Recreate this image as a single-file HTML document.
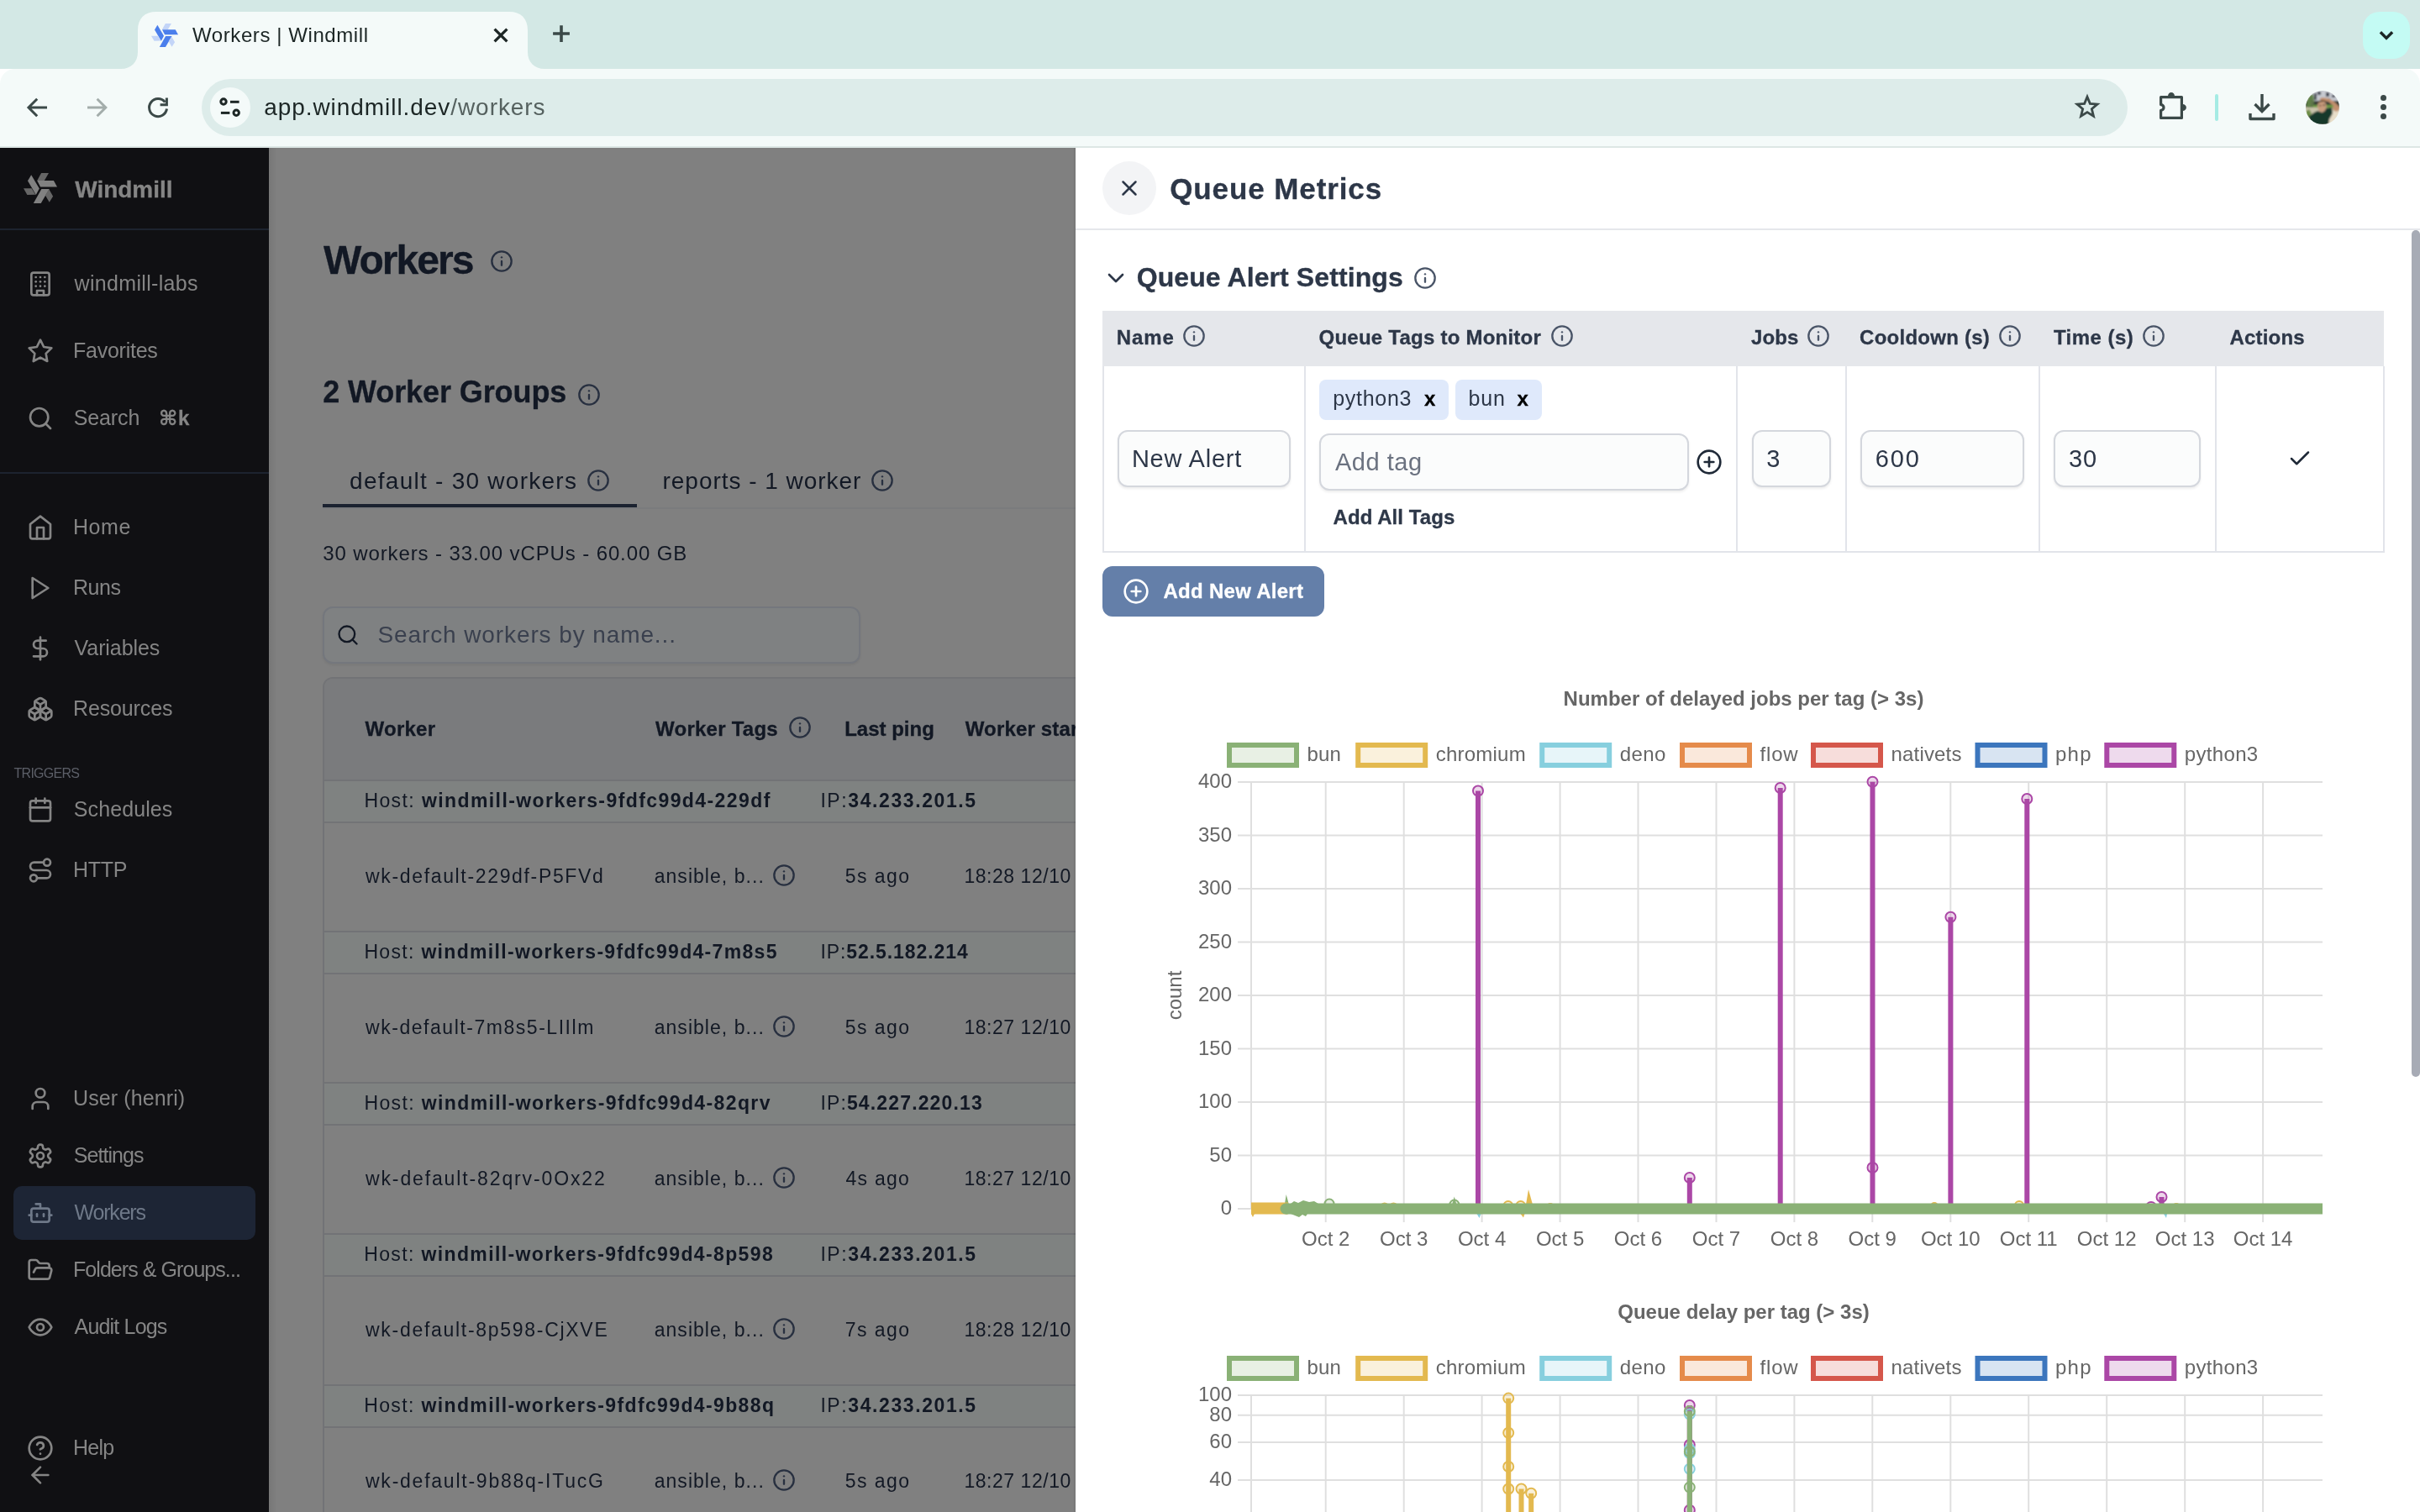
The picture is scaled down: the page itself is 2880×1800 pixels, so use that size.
<!DOCTYPE html>
<html lang="en"><head><meta charset="utf-8"><title>Workers | Windmill</title><style>html,body{margin:0;padding:0}body{width:2880px;height:1800px;overflow:hidden;background:#fff;font-family:"Liberation Sans", "DejaVu Sans", sans-serif}#r{position:relative;width:2880px;height:1800px;overflow:hidden}#r>div,#r>svg,#r>span{position:absolute;display:block}.t{white-space:nowrap;line-height:1}#r{-webkit-font-smoothing:antialiased;will-change:transform}</style></head><body><div id="r">
<div style="left:0px;top:0px;width:2880px;height:82px;background:#d3e8e5;"></div>
<svg style="left:144px;top:14px" width="504" height="68" viewBox="0 0 504 68"><path d="M0 68 C12 68 20 60 20 48 L20 22 C20 8 28 0 42 0 L462 0 C476 0 484 8 484 22 L484 48 C484 60 492 68 504 68 Z" fill="#f4faf9"/></svg>
<div style="left:0px;top:82px;width:2880px;height:92px;background:#f4faf9;border-radius:18px 18px 0 0;"></div>
<div style="left:0px;top:174px;width:2880px;height:2px;background:#dde7e5;"></div>
<svg style="left:180px;top:27.7px" width="32" height="28.8" viewBox="0 0 40 36"><g fill="#4b7fec"><polygon points="9.2,2.2 18.8,18.5 14.8,25.9 5,9.3"/><polygon points="16.2,9.1 35.9,9.1 40,16.5 20.1,16.5"/><polygon points="21.4,18.9 30.7,18.9 20.7,35.9 11.8,35.9"/></g><g fill="#c3d5f8"><polygon points="21.1,0 30,0 24.8,8.9 16.2,8.9"/><polygon points="0,18.3 9.6,18.3 14.2,25.7 4.4,25.9"/><polygon points="30.3,19.3 35.1,27.8 30.7,34.8 25.9,26.5"/></g></svg>
<span class="t" style="left:229.0px;top:29.7px;font-size:24px;color:#1c2625;letter-spacing:0.58px;">Workers | Windmill</span>
<svg style="left:583px;top:29px" width="26" height="26" viewBox="0 0 26 26" fill="none" stroke="#1c2625" stroke-width="3.3"><path d="M5.6 5.6l14.8 14.8M20.4 5.6L5.6 20.4"/></svg>
<svg style="left:654px;top:26px" width="28" height="28" viewBox="0 0 28 28" fill="none" stroke="#3b4948" stroke-width="3.6" stroke-linecap="butt"><path d="M14 4.2v19.8M4.1 14h19.8"/></svg>
<div style="left:2812px;top:14px;width:56px;height:56px;background:#c4fbf4;border-radius:20px;"></div>
<svg style="left:2826px;top:30px" width="28" height="24" viewBox="0 0 28 24" fill="none" stroke="#1c2625" stroke-width="3.4" stroke-linejoin="miter"><path d="M6.9 8.3l7.1 7.1 7.1-7.1"/></svg>
<svg style="left:28px;top:112px" width="32" height="32" viewBox="0 0 32 32" fill="none" stroke="#3b4948" stroke-width="3" stroke-linejoin="miter"><path d="M16.2 5.8L6 16l10.2 10.2M6.5 16H28"/></svg>
<svg style="left:100px;top:112px" width="32" height="32" viewBox="0 0 32 32" fill="none" stroke="#a3adab" stroke-width="3" stroke-linejoin="miter"><path d="M15.6 5.8l10.2 10.2-10.2 10.2M25.3 16H4"/></svg>
<svg style="left:172px;top:112px" width="32" height="32" viewBox="0 0 32 32" fill="none" stroke="#3b4948" stroke-width="3"><path d="M26.5 17.5A10.5 10.5 0 1 1 24.4 9.7"/><path d="M26.4 4.4V12.7H18.6" stroke-linejoin="miter"/></svg>
<div style="left:240px;top:94px;width:2292px;height:68px;background:#ddecea;border-radius:34px;"></div>
<div style="left:250px;top:104px;width:48px;height:48px;background:#f4faf9;border-radius:24px;"></div>
<svg style="left:258px;top:112px" width="32" height="32" viewBox="0 0 32 32" fill="none" stroke="#1c2625" stroke-width="3"><circle cx="8" cy="9" r="3.2"/><path d="M16 9.3h10.6"/><circle cx="23.2" cy="22.3" r="3.2"/><path d="M4.9 22.4h10.5"/></svg>
<span class="t" style="left:314.2px;top:113.8px;font-size:28px;color:#1c2625;letter-spacing:0.94px;">app.windmill.dev<span style="color:#55615f">/workers</span></span>
<svg style="left:2467.7px;top:111px" width="32" height="32" viewBox="0 0 24 24" fill="none" stroke="#3b4948" stroke-width="2.1" stroke-linejoin="miter"><polygon points="12 3.2 14.5 9.3 21 9.8 16 14 17.6 20.4 12 17 6.4 20.4 8 14 3 9.8 9.5 9.3"/></svg>
<svg style="left:2566px;top:108px" width="40" height="40" viewBox="0 0 40 40" fill="none" stroke="#3b4948" stroke-width="3.2" stroke-linejoin="round"><path d="M5.6 7.6H30.4V32.4H5.6V23.4A3.4 3.4 0 0 0 5.6 16.6Z"/><path d="M14 6.4a4 4.3 0 0 1 8 0zM31.6 16a4.3 4 0 0 1 0 8z" fill="#3b4948" stroke="none"/></svg>
<div style="left:2636px;top:112px;width:4px;height:32px;background:#a5ebe4;border-radius:2px;"></div>
<svg style="left:2674px;top:110px" width="36" height="36" viewBox="0 0 36 36" fill="none" stroke="#3b4948" stroke-width="3.4" stroke-linejoin="miter"><path d="M18 2v20M9.5 14l8.5 8.5 8.5-8.5"/><path d="M4 25v6.5h28V25" stroke-linejoin="round"/></svg>
<svg style="left:2744px;top:108px" width="40" height="40" viewBox="0 0 40 40"><defs><clipPath id="av"><circle cx="20" cy="20" r="20"/></clipPath><filter id="avb" x="-10%" y="-10%" width="120%" height="120%"><feGaussianBlur stdDeviation="0.9"/></filter></defs><g clip-path="url(#av)"><g filter="url(#avb)"><rect x="-2" y="-2" width="44" height="44" fill="#c8c4b0"/><rect x="6" y="-2" width="36" height="14" fill="#c6c9d0"/><path d="M10 3h3v8h-3zM14 1h4v4h-4zM24 2h4v5h-4zM23 9h2v4h-2zM27 9h2v4h-2zM31 5h4v3h-4z" fill="#3b404c"/><rect x="-2" y="12" width="44" height="7" fill="#343d38"/><rect x="6" y="17" width="30" height="3.4" fill="#6f9a42"/><path d="M1 14c1-6 4-10 8-10l1 9-2 7h-7z" fill="#5f8246"/><rect x="6.6" y="11" width="1" height="13" fill="#5d5a50"/><path d="M-2 20h16v9l-10 4h-6z" fill="#c9c3aa"/><path d="M0 25l4-3 3 5-3 4h-4z" fill="#6d8f47"/><path d="M26 24h16v18h-16z" fill="#e8dec9"/><path d="M3 31l7-5 4-2 6 2 3-5 8-1 1 7-4 7-1 7H7z" fill="#15382c"/><path d="M16 10.5l3-2.5 8 1 7 4 6 6v4l-4 2-4-3 1-4-6-5-7-1z" fill="#c3906e"/><ellipse cx="19.3" cy="18.6" rx="5.3" ry="6.8" fill="#c99c7e"/><path d="M13.8 15.5c0-5 10-6 11-1.5-3-1.6-7-1.3-11 1.5z" fill="#5c3f2b"/><path d="M16 17h2.4v1.3H16zM20.6 16.6H23v1.3h-2.4z" fill="#4a3226"/></g></g></svg>
<div style="left:2832.5px;top:113.3px;width:7px;height:7px;background:#3b4948;border-radius:50%;"></div>
<div style="left:2832.5px;top:124.3px;width:7px;height:7px;background:#3b4948;border-radius:50%;"></div>
<div style="left:2832.5px;top:135.3px;width:7px;height:7px;background:#3b4948;border-radius:50%;"></div>
<div style="left:320px;top:176px;width:960px;height:1624px;background:#808080;"></div>
<div style="left:320px;top:176px;width:10px;height:1624px;background:linear-gradient(90deg,rgba(0,0,0,.07),rgba(0,0,0,0));"></div>
<span class="t" style="left:385.0px;top:286.2px;font-size:48px;font-weight:700;-webkit-text-stroke:.3px;color:#121824;letter-spacing:-1.95px;">Workers</span>
<svg style="left:582.7px;top:297.0px;" width="28" height="28" viewBox="0 0 24 24" fill="none" stroke="#283040" stroke-width="2" stroke-linecap="round" stroke-linejoin="round"><circle cx="12" cy="12" r="10"/><path d="M12 16v-4"/><path d="M12 8h.01"/></svg>
<span class="t" style="left:384.2px;top:449.2px;font-size:36px;font-weight:700;-webkit-text-stroke:.3px;color:#121824;letter-spacing:-0.09px;">2 Worker Groups</span>
<svg style="left:687.0px;top:455.7px;" width="28" height="28" viewBox="0 0 24 24" fill="none" stroke="#283040" stroke-width="2" stroke-linecap="round" stroke-linejoin="round"><circle cx="12" cy="12" r="10"/><path d="M12 16v-4"/><path d="M12 8h.01"/></svg>
<div style="left:384px;top:604px;width:896px;height:2px;background:#7a7b7d;"></div>
<div style="left:384px;top:600px;width:374px;height:4px;background:#1b2230;"></div>
<span class="t" style="left:416.1px;top:558.5px;font-size:28px;color:#121824;letter-spacing:1.26px;">default - 30 workers</span>
<svg style="left:698.0px;top:558.0px;" width="28" height="28" viewBox="0 0 24 24" fill="none" stroke="#283040" stroke-width="2" stroke-linecap="round" stroke-linejoin="round"><circle cx="12" cy="12" r="10"/><path d="M12 16v-4"/><path d="M12 8h.01"/></svg>
<span class="t" style="left:788.5px;top:558.5px;font-size:28px;color:#121824;letter-spacing:0.97px;">reports - 1 worker</span>
<svg style="left:1035.7px;top:558.0px;" width="28" height="28" viewBox="0 0 24 24" fill="none" stroke="#283040" stroke-width="2" stroke-linecap="round" stroke-linejoin="round"><circle cx="12" cy="12" r="10"/><path d="M12 16v-4"/><path d="M12 8h.01"/></svg>
<span class="t" style="left:384.2px;top:647.3px;font-size:24px;color:#121824;letter-spacing:0.89px;">30 workers - 33.00 vCPUs - 60.00 GB</span>
<div style="left:384px;top:722px;width:640px;height:68px;background:#7f8182;border:2px solid #74777d;border-radius:12px;box-sizing:border-box;box-shadow:0 2px 3px rgba(0,0,0,.06);"></div>
<svg style="left:400.0px;top:742.0px;" width="28" height="28" viewBox="0 0 24 24" fill="none" stroke="#121824" stroke-width="2" stroke-linecap="round" stroke-linejoin="round"><circle cx="11" cy="11" r="8"/><path d="m21 21-4.3-4.3"/></svg>
<span class="t" style="left:449.4px;top:742.3px;font-size:28px;color:#3a404e;letter-spacing:0.90px;">Search workers by name...</span>
<div style="left:384px;top:806px;width:1000px;height:1100px;background:#808080;border:2px solid #727376;border-radius:12px;box-sizing:border-box;"></div>
<div style="left:386px;top:808px;width:998px;height:121px;background:#7a7b7d;border-radius:10px 0 0 0;"></div>
<span class="t" style="left:434.5px;top:855.5px;font-size:24px;font-weight:700;-webkit-text-stroke:.3px;color:#121824;letter-spacing:0.25px;">Worker</span>
<span class="t" style="left:780.0px;top:855.5px;font-size:24px;font-weight:700;-webkit-text-stroke:.3px;color:#121824;letter-spacing:0.25px;">Worker Tags</span>
<svg style="left:938.0px;top:852.0px;" width="28" height="28" viewBox="0 0 24 24" fill="none" stroke="#283040" stroke-width="2" stroke-linecap="round" stroke-linejoin="round"><circle cx="12" cy="12" r="10"/><path d="M12 16v-4"/><path d="M12 8h.01"/></svg>
<span class="t" style="left:1005.2px;top:855.5px;font-size:24px;font-weight:700;-webkit-text-stroke:.3px;color:#121824;">Last ping</span>
<span class="t" style="left:1148.7px;top:855.5px;font-size:24px;font-weight:700;-webkit-text-stroke:.3px;color:#121824;letter-spacing:0.17px;">Worker start</span>
<div style="left:386px;top:928px;width:998px;height:2px;background:#727376;"></div>
<div style="left:386px;top:930px;width:998px;height:48px;background:#7f8281;"></div>
<div style="left:386px;top:978px;width:998px;height:2px;background:#727376;"></div>
<span class="t" style="left:433.4px;top:941.9px;font-size:23px;color:#121824;letter-spacing:1.41px;">Host: <b>windmill-workers-9fdfc99d4-229df</b></span>
<span class="t" style="left:976.4px;top:941.9px;font-size:23px;color:#121824;letter-spacing:1.59px;">IP:<b>34.233.201.5</b></span>
<span class="t" style="left:435.0px;top:1031.8px;font-size:23px;color:#121824;letter-spacing:1.66px;">wk-default-229df-P5FVd</span>
<span class="t" style="left:778.7px;top:1031.8px;font-size:23px;color:#121824;letter-spacing:1.04px;">ansible, b...</span>
<svg style="left:919.0px;top:1028.3px;" width="28" height="28" viewBox="0 0 24 24" fill="none" stroke="#283040" stroke-width="2" stroke-linecap="round" stroke-linejoin="round"><circle cx="12" cy="12" r="10"/><path d="M12 16v-4"/><path d="M12 8h.01"/></svg>
<span class="t" style="left:1005.7px;top:1031.8px;font-size:23px;color:#121824;letter-spacing:1.44px;">5s ago</span>
<span class="t" style="left:1147.4px;top:1031.8px;font-size:23px;color:#121824;letter-spacing:0.54px;">18:28 12/10</span>
<div style="left:386px;top:1108px;width:998px;height:2px;background:#727376;"></div>
<div style="left:386px;top:1110px;width:998px;height:48px;background:#7f8281;"></div>
<div style="left:386px;top:1158px;width:998px;height:2px;background:#727376;"></div>
<span class="t" style="left:433.4px;top:1121.9px;font-size:23px;color:#121824;letter-spacing:1.32px;">Host: <b>windmill-workers-9fdfc99d4-7m8s5</b></span>
<span class="t" style="left:976.4px;top:1121.9px;font-size:23px;color:#121824;letter-spacing:0.93px;">IP:<b>52.5.182.214</b></span>
<span class="t" style="left:435.0px;top:1211.8px;font-size:23px;color:#121824;letter-spacing:1.54px;">wk-default-7m8s5-LIIlm</span>
<span class="t" style="left:778.7px;top:1211.8px;font-size:23px;color:#121824;letter-spacing:1.04px;">ansible, b...</span>
<svg style="left:919.0px;top:1208.3px;" width="28" height="28" viewBox="0 0 24 24" fill="none" stroke="#283040" stroke-width="2" stroke-linecap="round" stroke-linejoin="round"><circle cx="12" cy="12" r="10"/><path d="M12 16v-4"/><path d="M12 8h.01"/></svg>
<span class="t" style="left:1005.7px;top:1211.8px;font-size:23px;color:#121824;letter-spacing:1.44px;">5s ago</span>
<span class="t" style="left:1147.4px;top:1211.8px;font-size:23px;color:#121824;letter-spacing:0.54px;">18:27 12/10</span>
<div style="left:386px;top:1288px;width:998px;height:2px;background:#727376;"></div>
<div style="left:386px;top:1290px;width:998px;height:48px;background:#7f8281;"></div>
<div style="left:386px;top:1338px;width:998px;height:2px;background:#727376;"></div>
<span class="t" style="left:433.4px;top:1301.9px;font-size:23px;color:#121824;letter-spacing:1.38px;">Host: <b>windmill-workers-9fdfc99d4-82qrv</b></span>
<span class="t" style="left:976.4px;top:1301.9px;font-size:23px;color:#121824;letter-spacing:1.14px;">IP:<b>54.227.220.13</b></span>
<span class="t" style="left:435.0px;top:1391.8px;font-size:23px;color:#121824;letter-spacing:1.87px;">wk-default-82qrv-0Ox22</span>
<span class="t" style="left:778.7px;top:1391.8px;font-size:23px;color:#121824;letter-spacing:1.04px;">ansible, b...</span>
<svg style="left:919.0px;top:1388.3px;" width="28" height="28" viewBox="0 0 24 24" fill="none" stroke="#283040" stroke-width="2" stroke-linecap="round" stroke-linejoin="round"><circle cx="12" cy="12" r="10"/><path d="M12 16v-4"/><path d="M12 8h.01"/></svg>
<span class="t" style="left:1006.5px;top:1391.8px;font-size:23px;color:#121824;letter-spacing:1.26px;">4s ago</span>
<span class="t" style="left:1147.4px;top:1391.8px;font-size:23px;color:#121824;letter-spacing:0.54px;">18:27 12/10</span>
<div style="left:386px;top:1468px;width:998px;height:2px;background:#727376;"></div>
<div style="left:386px;top:1470px;width:998px;height:48px;background:#7f8281;"></div>
<div style="left:386px;top:1518px;width:998px;height:2px;background:#727376;"></div>
<span class="t" style="left:433.2px;top:1481.9px;font-size:23px;color:#121824;letter-spacing:1.37px;">Host: <b>windmill-workers-9fdfc99d4-8p598</b></span>
<span class="t" style="left:976.4px;top:1481.9px;font-size:23px;color:#121824;letter-spacing:1.59px;">IP:<b>34.233.201.5</b></span>
<span class="t" style="left:435.0px;top:1571.8px;font-size:23px;color:#121824;letter-spacing:1.71px;">wk-default-8p598-CjXVE</span>
<span class="t" style="left:778.7px;top:1571.8px;font-size:23px;color:#121824;letter-spacing:1.04px;">ansible, b...</span>
<svg style="left:919.0px;top:1568.3px;" width="28" height="28" viewBox="0 0 24 24" fill="none" stroke="#283040" stroke-width="2" stroke-linecap="round" stroke-linejoin="round"><circle cx="12" cy="12" r="10"/><path d="M12 16v-4"/><path d="M12 8h.01"/></svg>
<span class="t" style="left:1005.7px;top:1571.8px;font-size:23px;color:#121824;letter-spacing:1.44px;">7s ago</span>
<span class="t" style="left:1147.4px;top:1571.8px;font-size:23px;color:#121824;letter-spacing:0.54px;">18:28 12/10</span>
<div style="left:386px;top:1648px;width:998px;height:2px;background:#727376;"></div>
<div style="left:386px;top:1650px;width:998px;height:48px;background:#7f8281;"></div>
<div style="left:386px;top:1698px;width:998px;height:2px;background:#727376;"></div>
<span class="t" style="left:433.2px;top:1661.9px;font-size:23px;color:#121824;letter-spacing:1.37px;">Host: <b>windmill-workers-9fdfc99d4-9b88q</b></span>
<span class="t" style="left:976.4px;top:1661.9px;font-size:23px;color:#121824;letter-spacing:1.59px;">IP:<b>34.233.201.5</b></span>
<span class="t" style="left:435.0px;top:1751.8px;font-size:23px;color:#121824;letter-spacing:1.76px;">wk-default-9b88q-ITucG</span>
<span class="t" style="left:778.7px;top:1751.8px;font-size:23px;color:#121824;letter-spacing:1.04px;">ansible, b...</span>
<svg style="left:919.0px;top:1748.3px;" width="28" height="28" viewBox="0 0 24 24" fill="none" stroke="#283040" stroke-width="2" stroke-linecap="round" stroke-linejoin="round"><circle cx="12" cy="12" r="10"/><path d="M12 16v-4"/><path d="M12 8h.01"/></svg>
<span class="t" style="left:1005.7px;top:1751.8px;font-size:23px;color:#121824;letter-spacing:1.44px;">5s ago</span>
<span class="t" style="left:1147.4px;top:1751.8px;font-size:23px;color:#121824;letter-spacing:0.54px;">18:27 12/10</span>
<div style="left:0px;top:176px;width:320px;height:1624px;background:#101013;"></div>
<svg style="left:27.9px;top:206px" width="40" height="36" viewBox="0 0 40 36"><g fill="#818181"><polygon points="9.2,2.2 18.8,18.5 14.8,25.9 5,9.3"/><polygon points="16.2,9.1 35.9,9.1 40,16.5 20.1,16.5"/><polygon points="21.4,18.9 30.7,18.9 20.7,35.9 11.8,35.9"/></g><g fill="#666666"><polygon points="21.1,0 30,0 24.8,8.9 16.2,8.9"/><polygon points="0,18.3 9.6,18.3 14.2,25.7 4.4,25.9"/><polygon points="30.3,19.3 35.1,27.8 30.7,34.8 25.9,26.5"/></g></svg>
<span class="t" style="left:89.3px;top:212.3px;font-size:28px;font-weight:700;-webkit-text-stroke:.3px;color:#858585;letter-spacing:-0.03px;">Windmill</span>
<div style="left:0px;top:272px;width:320px;height:2px;background:#1d232f;"></div>
<div style="left:0px;top:562px;width:320px;height:2px;background:#1d232f;"></div>
<div style="left:16px;top:1412px;width:288px;height:64px;background:#1d2535;border-radius:10px;"></div>
<svg style="left:32.0px;top:322.0px;" width="32" height="32" viewBox="0 0 24 24" fill="none" stroke="#858585" stroke-width="2" stroke-linecap="round" stroke-linejoin="round"><rect width="16" height="20" x="4" y="2" rx="2" ry="2"/><path d="M9 22v-4h6v4"/><path d="M8 6h.01"/><path d="M16 6h.01"/><path d="M12 6h.01"/><path d="M12 10h.01"/><path d="M12 14h.01"/><path d="M16 10h.01"/><path d="M16 14h.01"/><path d="M8 10h.01"/><path d="M8 14h.01"/></svg>
<span class="t" style="left:88.6px;top:324.8px;font-size:25px;color:#858585;letter-spacing:0.32px;">windmill-labs</span>
<svg style="left:32.0px;top:402.0px;" width="32" height="32" viewBox="0 0 24 24" fill="none" stroke="#858585" stroke-width="2" stroke-linecap="round" stroke-linejoin="round"><polygon points="12 2 15.09 8.26 22 9.27 17 14.14 18.18 21.02 12 17.77 5.82 21.02 7 14.14 2 9.27 8.91 8.26 12 2"/></svg>
<span class="t" style="left:87.0px;top:404.8px;font-size:25px;color:#858585;letter-spacing:-0.25px;">Favorites</span>
<svg style="left:32.0px;top:482.0px;" width="32" height="32" viewBox="0 0 24 24" fill="none" stroke="#858585" stroke-width="2" stroke-linecap="round" stroke-linejoin="round"><circle cx="11" cy="11" r="8"/><path d="m21 21-4.3-4.3"/></svg>
<span class="t" style="left:87.8px;top:484.8px;font-size:25px;color:#858585;letter-spacing:-0.14px;">Search</span>
<svg style="left:32.0px;top:612.0px;" width="32" height="32" viewBox="0 0 24 24" fill="none" stroke="#858585" stroke-width="2" stroke-linecap="round" stroke-linejoin="round"><path d="m3 9 9-7 9 7v11a2 2 0 0 1-2 2H5a2 2 0 0 1-2-2z"/><polyline points="9 22 9 12 15 12 15 22"/></svg>
<span class="t" style="left:87.0px;top:614.8px;font-size:25px;color:#858585;letter-spacing:0.54px;">Home</span>
<svg style="left:32.0px;top:684.0px;" width="32" height="32" viewBox="0 0 24 24" fill="none" stroke="#858585" stroke-width="2" stroke-linecap="round" stroke-linejoin="round"><polygon points="5 3 19 12 5 21 5 3"/></svg>
<span class="t" style="left:87.0px;top:686.8px;font-size:25px;color:#858585;letter-spacing:-0.48px;">Runs</span>
<svg style="left:32.0px;top:756.0px;" width="32" height="32" viewBox="0 0 24 24" fill="none" stroke="#858585" stroke-width="2" stroke-linecap="round" stroke-linejoin="round"><line x1="12" x2="12" y1="2" y2="22"/><path d="M17 5H9.5a3.5 3.5 0 0 0 0 7h5a3.5 3.5 0 0 1 0 7H6"/></svg>
<span class="t" style="left:88.6px;top:758.8px;font-size:25px;color:#858585;letter-spacing:-0.09px;">Variables</span>
<svg style="left:32.0px;top:828.0px;" width="32" height="32" viewBox="0 0 24 24" fill="none" stroke="#858585" stroke-width="2" stroke-linecap="round" stroke-linejoin="round"><path d="M2.97 12.92A2 2 0 0 0 2 14.63v3.24a2 2 0 0 0 .97 1.71l3 1.8a2 2 0 0 0 2.06 0L12 19v-5.5l-5-3-4.03 2.42Z"/><path d="m7 16.5-4.74-2.85"/><path d="m7 16.5 5-3"/><path d="M7 16.5v5.17"/><path d="M12 13.5V19l3.97 2.38a2 2 0 0 0 2.06 0l3-1.8a2 2 0 0 0 .97-1.71v-3.24a2 2 0 0 0-.97-1.71L17 10.5l-5 3Z"/><path d="m17 16.5-5-3"/><path d="m17 16.5 4.74-2.85"/><path d="M17 16.5v5.17"/><path d="M7.97 4.42A2 2 0 0 0 7 6.13v4.37l5 3 5-3V6.13a2 2 0 0 0-.97-1.71l-3-1.8a2 2 0 0 0-2.06 0l-3 1.8Z"/><path d="M12 8 7.26 5.15"/><path d="m12 8 4.74-2.85"/><path d="M12 13.5V8"/></svg>
<span class="t" style="left:87.0px;top:830.8px;font-size:25px;color:#858585;letter-spacing:-0.13px;">Resources</span>
<svg style="left:32.0px;top:948.0px;" width="32" height="32" viewBox="0 0 24 24" fill="none" stroke="#858585" stroke-width="2" stroke-linecap="round" stroke-linejoin="round"><rect width="18" height="18" x="3" y="4" rx="2" ry="2"/><line x1="16" x2="16" y1="2" y2="6"/><line x1="8" x2="8" y1="2" y2="6"/><line x1="3" x2="21" y1="10" y2="10"/></svg>
<span class="t" style="left:87.8px;top:950.8px;font-size:25px;color:#858585;letter-spacing:0.09px;">Schedules</span>
<svg style="left:32.0px;top:1020.0px;" width="32" height="32" viewBox="0 0 24 24" fill="none" stroke="#858585" stroke-width="2" stroke-linecap="round" stroke-linejoin="round"><circle cx="6" cy="19" r="3"/><path d="M9 19h8.5a3.5 3.5 0 0 0 0-7h-11a3.5 3.5 0 0 1 0-7H15"/><circle cx="18" cy="5" r="3"/></svg>
<span class="t" style="left:87.0px;top:1022.8px;font-size:25px;color:#858585;letter-spacing:-0.30px;">HTTP</span>
<svg style="left:32.0px;top:1292.0px;" width="32" height="32" viewBox="0 0 24 24" fill="none" stroke="#858585" stroke-width="2" stroke-linecap="round" stroke-linejoin="round"><path d="M19 21v-2a4 4 0 0 0-4-4H9a4 4 0 0 0-4 4v2"/><circle cx="12" cy="7" r="4"/></svg>
<span class="t" style="left:87.0px;top:1294.8px;font-size:25px;color:#858585;letter-spacing:0.11px;">User (henri)</span>
<svg style="left:32.0px;top:1360.0px;" width="32" height="32" viewBox="0 0 24 24" fill="none" stroke="#858585" stroke-width="2" stroke-linecap="round" stroke-linejoin="round"><path d="M12.22 2h-.44a2 2 0 0 0-2 2v.18a2 2 0 0 1-1 1.73l-.43.25a2 2 0 0 1-2 0l-.15-.08a2 2 0 0 0-2.73.73l-.22.38a2 2 0 0 0 .73 2.73l.15.1a2 2 0 0 1 1 1.72v.51a2 2 0 0 1-1 1.74l-.15.09a2 2 0 0 0-.73 2.73l.22.38a2 2 0 0 0 2.73.73l.15-.08a2 2 0 0 1 2 0l.43.25a2 2 0 0 1 1 1.73V20a2 2 0 0 0 2 2h.44a2 2 0 0 0 2-2v-.18a2 2 0 0 1 1-1.73l.43-.25a2 2 0 0 1 2 0l.15.08a2 2 0 0 0 2.73-.73l.22-.39a2 2 0 0 0-.73-2.73l-.15-.08a2 2 0 0 1-1-1.74v-.5a2 2 0 0 1 1-1.74l.15-.09a2 2 0 0 0 .73-2.73l-.22-.38a2 2 0 0 0-2.73-.73l-.15.08a2 2 0 0 1-2 0l-.43-.25a2 2 0 0 1-1-1.73V4a2 2 0 0 0-2-2z"/><circle cx="12" cy="12" r="3"/></svg>
<span class="t" style="left:87.8px;top:1362.8px;font-size:25px;color:#858585;letter-spacing:-0.95px;">Settings</span>
<svg style="left:32.0px;top:1428.0px;" width="32" height="32" viewBox="0 0 24 24" fill="none" stroke="#6e7888" stroke-width="2" stroke-linecap="round" stroke-linejoin="round"><path d="M12 8V4H8"/><rect width="16" height="12" x="4" y="8" rx="2"/><path d="M2 14h2"/><path d="M20 14h2"/><path d="M15 13v2"/><path d="M9 13v2"/></svg>
<span class="t" style="left:88.6px;top:1430.8px;font-size:25px;color:#6e7888;letter-spacing:-1.20px;">Workers</span>
<svg style="left:32.0px;top:1496.0px;" width="32" height="32" viewBox="0 0 24 24" fill="none" stroke="#858585" stroke-width="2" stroke-linecap="round" stroke-linejoin="round"><path d="m6 14 1.45-2.9A2 2 0 0 1 9.24 10H20a2 2 0 0 1 1.94 2.5l-1.55 6a2 2 0 0 1-1.94 1.5H4a2 2 0 0 1-2-2V5c0-1.1.9-2 2-2h3.93a2 2 0 0 1 1.66.9l.82 1.2a2 2 0 0 0 1.66.9H18a2 2 0 0 1 2 2v2"/></svg>
<span class="t" style="left:87.0px;top:1498.8px;font-size:25px;color:#858585;letter-spacing:-0.94px;">Folders &amp; Groups...</span>
<svg style="left:32.0px;top:1564.0px;" width="32" height="32" viewBox="0 0 24 24" fill="none" stroke="#858585" stroke-width="2" stroke-linecap="round" stroke-linejoin="round"><path d="M2 12s3-7 10-7 10 7 10 7-3 7-10 7-10-7-10-7Z"/><circle cx="12" cy="12" r="3"/></svg>
<span class="t" style="left:88.6px;top:1566.8px;font-size:25px;color:#858585;letter-spacing:-0.82px;">Audit Logs</span>
<svg style="left:32.0px;top:1708.0px;" width="32" height="32" viewBox="0 0 24 24" fill="none" stroke="#858585" stroke-width="2" stroke-linecap="round" stroke-linejoin="round"><circle cx="12" cy="12" r="10"/><path d="M9.09 9a3 3 0 0 1 5.83 1c0 2-3 3-3 3"/><path d="M12 17h.01"/></svg>
<span class="t" style="left:87.0px;top:1710.8px;font-size:25px;color:#858585;letter-spacing:-0.78px;">Help</span>
<span class="t" style="left:188.9px;top:485.7px;font-size:24px;font-weight:700;-webkit-text-stroke:.3px;color:#858585;letter-spacing:0.90px;">⌘k</span>
<span class="t" style="left:16.6px;top:912.5px;font-size:16px;color:#5c5f68;letter-spacing:-0.75px;">TRIGGERS</span>
<svg style="left:32.0px;top:1740.0px;" width="32" height="32" viewBox="0 0 24 24" fill="none" stroke="#858585" stroke-width="2" stroke-linecap="round" stroke-linejoin="round"><path d="m12 19-7-7 7-7"/><path d="M19 12H5"/></svg>
<div style="left:1277px;top:176px;width:3px;height:1624px;background:linear-gradient(90deg,rgba(0,0,0,0),rgba(0,0,0,.08));"></div>
<div style="left:1280px;top:176px;width:1600px;height:1624px;background:#ffffff;"></div>
<div style="left:1312px;top:192px;width:64px;height:64px;background:#f3f4f6;border-radius:50%;"></div>
<svg style="left:1329.0px;top:209.0px;" width="30" height="30" viewBox="0 0 24 24" fill="none" stroke="#2d3748" stroke-width="2" stroke-linecap="round" stroke-linejoin="round"><path d="M18 6 6 18"/><path d="m6 6 12 12"/></svg>
<span class="t" style="left:1392.2px;top:206.5px;font-size:35px;font-weight:700;-webkit-text-stroke:.3px;color:#2d3748;letter-spacing:0.90px;">Queue Metrics</span>
<div style="left:1280px;top:272px;width:1600px;height:2px;background:#e5e7eb;"></div>
<div style="left:2870px;top:274px;width:10px;height:1008px;background:#a7abb5;border-radius:5px;"></div>
<svg style="left:1311.7px;top:314.5px;" width="32" height="32" viewBox="0 0 24 24" fill="none" stroke="#2d3748" stroke-width="2" stroke-linecap="round" stroke-linejoin="round"><path d="m6 9 6 6 6-6"/></svg>
<span class="t" style="left:1352.7px;top:313.5px;font-size:32px;font-weight:700;-webkit-text-stroke:.3px;color:#2d3748;letter-spacing:0.09px;">Queue Alert Settings</span>
<svg style="left:1682.0px;top:316.8px;" width="28" height="28" viewBox="0 0 24 24" fill="none" stroke="#4a5568" stroke-width="2" stroke-linecap="round" stroke-linejoin="round"><circle cx="12" cy="12" r="10"/><path d="M12 16v-4"/><path d="M12 8h.01"/></svg>
<div style="left:1312px;top:370px;width:1525px;height:66px;background:#e5e7eb;"></div>
<div style="left:1312px;top:436px;width:1526px;height:222px;background:#fff;border:2px solid #e2e4ea;border-top:none;box-sizing:border-box;"></div>
<div style="left:1552px;top:436px;width:2px;height:220px;background:#e2e4ea;"></div>
<div style="left:2066px;top:436px;width:2px;height:220px;background:#e2e4ea;"></div>
<div style="left:2196px;top:436px;width:2px;height:220px;background:#e2e4ea;"></div>
<div style="left:2426px;top:436px;width:2px;height:220px;background:#e2e4ea;"></div>
<div style="left:2636px;top:436px;width:2px;height:220px;background:#e2e4ea;"></div>
<span class="t" style="left:1328.7px;top:389.7px;font-size:24px;font-weight:700;-webkit-text-stroke:.3px;color:#2d3748;letter-spacing:0.90px;">Name</span>
<svg style="left:1406.8px;top:386.0px;" width="28" height="28" viewBox="0 0 24 24" fill="none" stroke="#4a5568" stroke-width="2" stroke-linecap="round" stroke-linejoin="round"><circle cx="12" cy="12" r="10"/><path d="M12 16v-4"/><path d="M12 8h.01"/></svg>
<span class="t" style="left:1569.5px;top:389.7px;font-size:24px;font-weight:700;-webkit-text-stroke:.3px;color:#2d3748;letter-spacing:0.24px;">Queue Tags to Monitor</span>
<svg style="left:1844.6px;top:386.0px;" width="28" height="28" viewBox="0 0 24 24" fill="none" stroke="#4a5568" stroke-width="2" stroke-linecap="round" stroke-linejoin="round"><circle cx="12" cy="12" r="10"/><path d="M12 16v-4"/><path d="M12 8h.01"/></svg>
<span class="t" style="left:2084.0px;top:389.7px;font-size:24px;font-weight:700;-webkit-text-stroke:.3px;color:#2d3748;letter-spacing:0.12px;">Jobs</span>
<svg style="left:2150.2px;top:386.0px;" width="28" height="28" viewBox="0 0 24 24" fill="none" stroke="#4a5568" stroke-width="2" stroke-linecap="round" stroke-linejoin="round"><circle cx="12" cy="12" r="10"/><path d="M12 16v-4"/><path d="M12 8h.01"/></svg>
<span class="t" style="left:2213.1px;top:389.7px;font-size:24px;font-weight:700;-webkit-text-stroke:.3px;color:#2d3748;letter-spacing:0.25px;">Cooldown (s)</span>
<svg style="left:2377.7px;top:386.0px;" width="28" height="28" viewBox="0 0 24 24" fill="none" stroke="#4a5568" stroke-width="2" stroke-linecap="round" stroke-linejoin="round"><circle cx="12" cy="12" r="10"/><path d="M12 16v-4"/><path d="M12 8h.01"/></svg>
<span class="t" style="left:2443.9px;top:389.7px;font-size:24px;font-weight:700;-webkit-text-stroke:.3px;color:#2d3748;letter-spacing:0.46px;">Time (s)</span>
<svg style="left:2548.6px;top:386.0px;" width="28" height="28" viewBox="0 0 24 24" fill="none" stroke="#4a5568" stroke-width="2" stroke-linecap="round" stroke-linejoin="round"><circle cx="12" cy="12" r="10"/><path d="M12 16v-4"/><path d="M12 8h.01"/></svg>
<span class="t" style="left:2653.5px;top:389.7px;font-size:24px;font-weight:700;-webkit-text-stroke:.3px;color:#2d3748;letter-spacing:0.18px;">Actions</span>
<div style="left:1330px;top:512px;width:206px;height:68px;background:#fbfcfc;border:2px solid #d4d7dd;border-radius:12px;box-sizing:border-box;box-shadow:0 2px 3px rgba(0,0,0,.07);"></div>
<span class="t" style="left:1346.9px;top:531.7px;font-size:29px;color:#2d3748;letter-spacing:0.79px;">New Alert</span>
<div style="left:1570px;top:452px;width:154px;height:48px;background:#dfe9fb;border-radius:8px;"></div>
<div style="left:1732px;top:452px;width:103px;height:48px;background:#dfe9fb;border-radius:8px;"></div>
<span class="t" style="left:1586.2px;top:462.3px;font-size:25px;color:#2d3748;letter-spacing:0.72px;">python3</span>
<span class="t" style="left:1694.9px;top:463.2px;font-size:24px;font-weight:700;-webkit-text-stroke:.3px;color:#000;">x</span>
<span class="t" style="left:1747.4px;top:462.3px;font-size:25px;color:#2d3748;letter-spacing:0.90px;">bun</span>
<span class="t" style="left:1805.5px;top:463.2px;font-size:24px;font-weight:700;-webkit-text-stroke:.3px;color:#000;">x</span>
<div style="left:1570px;top:516px;width:440px;height:68px;background:#fbfcfc;border:2px solid #d4d7dd;border-radius:12px;box-sizing:border-box;box-shadow:0 2px 3px rgba(0,0,0,.07);"></div>
<span class="t" style="left:1588.9px;top:535.7px;font-size:29px;color:#6b7280;letter-spacing:0.54px;">Add tag</span>
<svg style="left:2018.0px;top:533.7px;" width="32" height="32" viewBox="0 0 24 24" fill="none" stroke="#1f2937" stroke-width="2" stroke-linecap="round" stroke-linejoin="round"><circle cx="12" cy="12" r="10"/><path d="M8 12h8"/><path d="M12 8v8"/></svg>
<span class="t" style="left:1586.5px;top:603.9px;font-size:24px;font-weight:700;-webkit-text-stroke:.3px;color:#2d3748;letter-spacing:0.07px;">Add All Tags</span>
<div style="left:2085px;top:512px;width:94px;height:68px;background:#fbfcfc;border:2px solid #d4d7dd;border-radius:12px;box-sizing:border-box;box-shadow:0 2px 3px rgba(0,0,0,.07);"></div>
<span class="t" style="left:2102.2px;top:531.7px;font-size:29px;color:#2d3748;letter-spacing:1.07px;">3</span>
<div style="left:2214px;top:512px;width:195px;height:68px;background:#fbfcfc;border:2px solid #d4d7dd;border-radius:12px;box-sizing:border-box;box-shadow:0 2px 3px rgba(0,0,0,.07);"></div>
<span class="t" style="left:2231.7px;top:531.7px;font-size:29px;color:#2d3748;letter-spacing:1.89px;">600</span>
<div style="left:2444px;top:512px;width:175px;height:68px;background:#fbfcfc;border:2px solid #d4d7dd;border-radius:12px;box-sizing:border-box;box-shadow:0 2px 3px rgba(0,0,0,.07);"></div>
<span class="t" style="left:2461.9px;top:531.7px;font-size:29px;color:#2d3748;letter-spacing:1.07px;">30</span>
<svg style="left:2721.7px;top:531.0px;" width="30" height="30" viewBox="0 0 24 24" fill="none" stroke="#1f2937" stroke-width="2" stroke-linecap="round" stroke-linejoin="round"><path d="M20 6 9 17l-5-5"/></svg>
<div style="left:1312px;top:674px;width:264px;height:60px;background:#647fa9;border-radius:12px;"></div>
<svg style="left:1336.2px;top:688.0px;" width="32" height="32" viewBox="0 0 24 24" fill="none" stroke="#fff" stroke-width="2" stroke-linecap="round" stroke-linejoin="round"><circle cx="12" cy="12" r="10"/><path d="M8 12h8"/><path d="M12 8v8"/></svg>
<span class="t" style="left:1384.5px;top:692.0px;font-size:24px;font-weight:700;-webkit-text-stroke:.3px;color:#fff;letter-spacing:0.28px;">Add New Alert</span>
<svg style="left:1380px;top:790px" width="1490" height="1010" viewBox="1380 790 1490 1010" font-family="&quot;Liberation Sans&quot;, sans-serif" font-size="24"><text x="2075" y="840.3" text-anchor="middle" font-weight="700" fill="#666666">Number of delayed jobs per tag (&gt; 3s)</text><rect x="1463.0" y="887" width="80" height="24" fill="#e8f0e4" stroke="#8ab176" stroke-width="6"/><text x="1555.5" y="906.3" textLength="40.4" fill="#666666">bun</text><rect x="1616.2" y="887" width="80" height="24" fill="#faf1dc" stroke="#e3b94f" stroke-width="6"/><text x="1708.7" y="906.3" textLength="107.0" fill="#666666">chromium</text><rect x="1835.2" y="887" width="80" height="24" fill="#e7f5f9" stroke="#87cfde" stroke-width="6"/><text x="1927.7" y="906.3" textLength="54.7" fill="#666666">deno</text><rect x="2002.0" y="887" width="80" height="24" fill="#fae8db" stroke="#e58b4b" stroke-width="6"/><text x="2094.5" y="906.3" textLength="45.2" fill="#666666">flow</text><rect x="2158.0" y="887" width="80" height="24" fill="#f7dddb" stroke="#d5574b" stroke-width="6"/><text x="2250.5" y="906.3" textLength="83.9" fill="#666666">nativets</text><rect x="2353.5" y="887" width="80" height="24" fill="#d8e4f2" stroke="#3c76bd" stroke-width="6"/><text x="2446.0" y="906.3" textLength="42.5" fill="#666666">php</text><rect x="2507.3" y="887" width="80" height="24" fill="#eedaed" stroke="#ab47a6" stroke-width="6"/><text x="2599.8" y="906.3" textLength="87.4" fill="#666666">python3</text><text x="1466" y="1446.2" text-anchor="end" fill="#666666">0</text><text x="1466" y="1382.7" text-anchor="end" fill="#666666">50</text><text x="1466" y="1319.2" text-anchor="end" fill="#666666">100</text><text x="1466" y="1255.7" text-anchor="end" fill="#666666">150</text><text x="1466" y="1192.2" text-anchor="end" fill="#666666">200</text><text x="1466" y="1128.7" text-anchor="end" fill="#666666">250</text><text x="1466" y="1065.2" text-anchor="end" fill="#666666">300</text><text x="1466" y="1001.7" text-anchor="end" fill="#666666">350</text><text x="1466" y="938.2" text-anchor="end" fill="#666666">400</text><text x="1577.7" y="1482.6" text-anchor="middle" fill="#666666">Oct 2</text><text x="1670.7" y="1482.6" text-anchor="middle" fill="#666666">Oct 3</text><text x="1763.6" y="1482.6" text-anchor="middle" fill="#666666">Oct 4</text><text x="1856.6" y="1482.6" text-anchor="middle" fill="#666666">Oct 5</text><text x="1949.5" y="1482.6" text-anchor="middle" fill="#666666">Oct 6</text><text x="2042.5" y="1482.6" text-anchor="middle" fill="#666666">Oct 7</text><text x="2135.4" y="1482.6" text-anchor="middle" fill="#666666">Oct 8</text><text x="2228.3" y="1482.6" text-anchor="middle" fill="#666666">Oct 9</text><text x="2321.3" y="1482.6" text-anchor="middle" fill="#666666">Oct 10</text><text x="2414.2" y="1482.6" text-anchor="middle" fill="#666666">Oct 11</text><text x="2507.2" y="1482.6" text-anchor="middle" fill="#666666">Oct 12</text><text x="2600.2" y="1482.6" text-anchor="middle" fill="#666666">Oct 13</text><text x="2693.1" y="1482.6" text-anchor="middle" fill="#666666">Oct 14</text><path d="M1473 1439.0H2764.0M1473 1375.5H2764.0M1473 1312.0H2764.0M1473 1248.5H2764.0M1473 1185.0H2764.0M1473 1121.5H2764.0M1473 1058.0H2764.0M1473 994.5H2764.0M1473 931.0H2764.0M1489.0 931V1439M1577.7 931V1455M1670.7 931V1455M1763.6 931V1455M1856.6 931V1455M1949.5 931V1455M2042.5 931V1455M2135.4 931V1455M2228.3 931V1455M2321.3 931V1455M2414.2 931V1455M2507.2 931V1455M2600.2 931V1455M2693.1 931V1455" stroke="#000" stroke-opacity=".125" stroke-width="2" fill="none"/><text transform="translate(1406.4 1185) rotate(-90)" text-anchor="middle" fill="#666666">count</text><rect x="1756.0" y="941.5" width="6" height="497.5" fill="#ab47a6"/><circle cx="1759.0" cy="941.5" r="6" fill="#ab47a6" fill-opacity=".22" stroke="#ab47a6" stroke-width="2"/><rect x="2007.8" y="1402.0" width="6" height="37.0" fill="#ab47a6"/><circle cx="2010.8" cy="1402.0" r="6" fill="#ab47a6" fill-opacity=".22" stroke="#ab47a6" stroke-width="2"/><rect x="2115.7" y="938.0" width="6" height="501.0" fill="#ab47a6"/><circle cx="2118.7" cy="938.0" r="6" fill="#ab47a6" fill-opacity=".22" stroke="#ab47a6" stroke-width="2"/><rect x="2225.5" y="930.8" width="6" height="508.2" fill="#ab47a6"/><circle cx="2228.5" cy="930.8" r="6" fill="#ab47a6" fill-opacity=".22" stroke="#ab47a6" stroke-width="2"/><rect x="2318.4" y="1091.8" width="6" height="347.2" fill="#ab47a6"/><circle cx="2321.4" cy="1091.8" r="6" fill="#ab47a6" fill-opacity=".22" stroke="#ab47a6" stroke-width="2"/><rect x="2409.3" y="951.0" width="6" height="488.0" fill="#ab47a6"/><circle cx="2412.3" cy="951.0" r="6" fill="#ab47a6" fill-opacity=".22" stroke="#ab47a6" stroke-width="2"/><rect x="2569.5" y="1425.0" width="6" height="14.0" fill="#ab47a6"/><circle cx="2572.5" cy="1425.0" r="6" fill="#ab47a6" fill-opacity=".22" stroke="#ab47a6" stroke-width="2"/><circle cx="2228.5" cy="1390.0" r="6" fill="#ab47a6" fill-opacity=".22" stroke="#ab47a6" stroke-width="2"/><circle cx="2560.0" cy="1437.0" r="6" fill="#ab47a6" fill-opacity=".22" stroke="#ab47a6" stroke-width="2"/><path d="M1816 1434L1819 1416L1824 1434Z" fill="#e3b94f"/><path d="M1528.5 1436L1530.7 1422L1534.5 1436ZM1727.5 1436L1730.8 1424.5L1734 1436ZM1536 1433l4-3 5 2 6-3 7 2 6-1 5 3z" fill="#8ab176"/><circle cx="1647.7" cy="1437.0" r="4.5" fill="#e3b94f" fill-opacity=".22" stroke="#e3b94f" stroke-width="2"/><circle cx="1658.4" cy="1437.0" r="4.5" fill="#e3b94f" fill-opacity=".22" stroke="#e3b94f" stroke-width="2"/><circle cx="1794.8" cy="1435.5" r="5.5" fill="#e3b94f" fill-opacity=".22" stroke="#e3b94f" stroke-width="2"/><circle cx="1809.7" cy="1435.5" r="5.5" fill="#e3b94f" fill-opacity=".22" stroke="#e3b94f" stroke-width="2"/><circle cx="1845.0" cy="1437.0" r="4" fill="#e3b94f" fill-opacity=".22" stroke="#e3b94f" stroke-width="2"/><circle cx="2302.0" cy="1436.0" r="4" fill="#e3b94f" fill-opacity=".22" stroke="#e3b94f" stroke-width="2"/><circle cx="2403.0" cy="1435.0" r="5" fill="#e3b94f" fill-opacity=".22" stroke="#e3b94f" stroke-width="2"/><circle cx="2590.0" cy="1437.0" r="4" fill="#e3b94f" fill-opacity=".22" stroke="#e3b94f" stroke-width="2"/><circle cx="1582.0" cy="1433.0" r="5.5" fill="#8ab176" fill-opacity=".22" stroke="#8ab176" stroke-width="2"/><circle cx="1730.8" cy="1434.0" r="5.5" fill="#8ab176" fill-opacity=".22" stroke="#8ab176" stroke-width="2"/><rect x="1489.0" y="1431.5" width="44" height="14" fill="#e3b94f"/><path d="M1489 1445h4l-2 4zM1809.5 1445h5l-1.5 4.5z" fill="#e3b94f"/><path d="M1757.5 1445h5l-2 5zM2575 1445h4l-1 5z" fill="#87cfde"/><path d="M1536 1445h20l-2 3-4-2-4 3-5-2z" fill="#8ab176"/><rect x="1530" y="1432.5" width="1234.0" height="13" fill="#8ab176"/><circle cx="1530" cy="1439" r="6.5" fill="#8ab176"/><text x="2075" y="1570.3" text-anchor="middle" font-weight="700" fill="#666666">Queue delay per tag (&gt; 3s)</text><rect x="1463.0" y="1617" width="80" height="24" fill="#e8f0e4" stroke="#8ab176" stroke-width="6"/><text x="1555.5" y="1636.3" textLength="40.4" fill="#666666">bun</text><rect x="1616.2" y="1617" width="80" height="24" fill="#faf1dc" stroke="#e3b94f" stroke-width="6"/><text x="1708.7" y="1636.3" textLength="107.0" fill="#666666">chromium</text><rect x="1835.2" y="1617" width="80" height="24" fill="#e7f5f9" stroke="#87cfde" stroke-width="6"/><text x="1927.7" y="1636.3" textLength="54.7" fill="#666666">deno</text><rect x="2002.0" y="1617" width="80" height="24" fill="#fae8db" stroke="#e58b4b" stroke-width="6"/><text x="2094.5" y="1636.3" textLength="45.2" fill="#666666">flow</text><rect x="2158.0" y="1617" width="80" height="24" fill="#f7dddb" stroke="#d5574b" stroke-width="6"/><text x="2250.5" y="1636.3" textLength="83.9" fill="#666666">nativets</text><rect x="2353.5" y="1617" width="80" height="24" fill="#d8e4f2" stroke="#3c76bd" stroke-width="6"/><text x="2446.0" y="1636.3" textLength="42.5" fill="#666666">php</text><rect x="2507.3" y="1617" width="80" height="24" fill="#eedaed" stroke="#ab47a6" stroke-width="6"/><text x="2599.8" y="1636.3" textLength="87.4" fill="#666666">python3</text><text x="1466" y="1668.2" text-anchor="end" fill="#666666">100</text><text x="1466" y="1691.9" text-anchor="end" fill="#666666">80</text><text x="1466" y="1724.2" text-anchor="end" fill="#666666">60</text><text x="1466" y="1769.2" text-anchor="end" fill="#666666">40</text><path d="M1473 1661H2764.0M1473 1684.7H2764.0M1473 1717H2764.0M1473 1762H2764.0M1489.0 1661V1800M1577.7 1661V1800M1670.7 1661V1800M1763.6 1661V1800M1856.6 1661V1800M1949.5 1661V1800M2042.5 1661V1800M2135.4 1661V1800M2228.3 1661V1800M2321.3 1661V1800M2414.2 1661V1800M2507.2 1661V1800M2600.2 1661V1800M2693.1 1661V1800" stroke="#000" stroke-opacity=".125" stroke-width="2" fill="none"/><rect x="1792.2" y="1664.6" width="6" height="135.4" fill="#e3b94f"/><rect x="1807.5" y="1772.5" width="6" height="27.5" fill="#e3b94f"/><rect x="1819.2" y="1777.8" width="6" height="22.2" fill="#e3b94f"/><circle cx="1795.2" cy="1664.6" r="6" fill="#e3b94f" fill-opacity=".22" stroke="#e3b94f" stroke-width="2"/><circle cx="1795.2" cy="1705.8" r="6" fill="#e3b94f" fill-opacity=".22" stroke="#e3b94f" stroke-width="2"/><circle cx="1795.2" cy="1746.0" r="6" fill="#e3b94f" fill-opacity=".22" stroke="#e3b94f" stroke-width="2"/><circle cx="1795.2" cy="1772.5" r="6" fill="#e3b94f" fill-opacity=".22" stroke="#e3b94f" stroke-width="2"/><circle cx="1810.5" cy="1772.5" r="6" fill="#e3b94f" fill-opacity=".22" stroke="#e3b94f" stroke-width="2"/><circle cx="1822.2" cy="1777.8" r="6" fill="#e3b94f" fill-opacity=".22" stroke="#e3b94f" stroke-width="2"/><rect x="2007.8" y="1673.0" width="6" height="127.0" fill="#ab47a6"/><circle cx="2010.8" cy="1673.0" r="6" fill="#ab47a6" fill-opacity=".22" stroke="#ab47a6" stroke-width="2"/><circle cx="2010.8" cy="1720.0" r="6" fill="#ab47a6" fill-opacity=".22" stroke="#ab47a6" stroke-width="2"/><circle cx="2010.8" cy="1797.7" r="6" fill="#ab47a6" fill-opacity=".22" stroke="#ab47a6" stroke-width="2"/><circle cx="2010.8" cy="1683.6" r="6" fill="#87cfde" fill-opacity=".22" stroke="#87cfde" stroke-width="2"/><circle cx="2010.8" cy="1725.0" r="6" fill="#87cfde" fill-opacity=".22" stroke="#87cfde" stroke-width="2"/><circle cx="2010.8" cy="1730.0" r="6" fill="#87cfde" fill-opacity=".22" stroke="#87cfde" stroke-width="2"/><circle cx="2010.8" cy="1748.7" r="6" fill="#87cfde" fill-opacity=".22" stroke="#87cfde" stroke-width="2"/><rect x="2007.8" y="1680.0" width="6" height="120.0" fill="#8ab176"/><circle cx="2010.8" cy="1680.0" r="6" fill="#8ab176" fill-opacity=".22" stroke="#8ab176" stroke-width="2"/><circle cx="2010.8" cy="1728.0" r="6" fill="#8ab176" fill-opacity=".22" stroke="#8ab176" stroke-width="2"/><circle cx="2010.8" cy="1770.6" r="6" fill="#8ab176" fill-opacity=".22" stroke="#8ab176" stroke-width="2"/></svg>
</div><script>(function(){var d=window.devicePixelRatio||1;if(d>1.01){var r=document.getElementById("r");r.style.zoom=1/d;document.body.style.width=(2880/d)+"px";document.body.style.height=(1800/d)+"px";}})();</script></body></html>
